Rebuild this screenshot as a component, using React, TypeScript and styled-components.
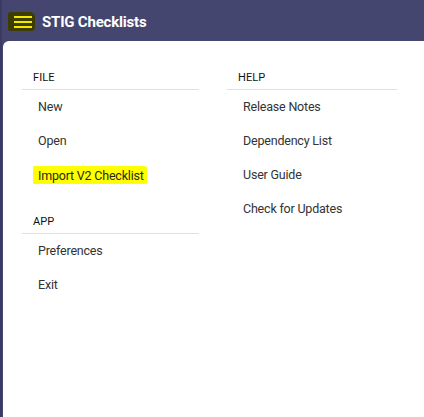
import React from "react";
import styled, { createGlobalStyle } from "styled-components";

const Global = createGlobalStyle`
  html, body { margin: 0; padding: 0; background: #45466f; }
  body { font-family: Roboto, "Liberation Sans", sans-serif; }
  #root { min-height: 417px; display: flex; flex-direction: column; }
`;

const Page = styled.div`
  display: flex;
  flex-direction: column;
  height: 417px;
  background: #45466f;
  box-shadow: inset 2px 0 0 #3a3a62;
`;

const Header = styled.header`
  height: 41px;
  display: flex;
  align-items: center;
  padding-left: 8px;
  gap: 7px;
  box-sizing: border-box;
`;

const MenuButton = styled.div`
  width: 27px;
  height: 19px;
  margin-top: 2px;
  background: #3d3d02;
  border-radius: 3px 5px 4px 2px;
  display: flex;
  flex-direction: column;
  justify-content: center;
  align-items: center;
  gap: 3px;
  padding-left: 3px;
  box-sizing: border-box;
`;

const MenuLine = styled.span`
  display: block;
  width: 18px;
  height: 2px;
  background: #f3e800;
`;

const Title = styled.h1`
  margin: 3px 0 0;
  color: #ffffff;
  font-size: 15px;
  font-weight: 700;
  letter-spacing: -0.2px;
`;

const Panel = styled.main`
  flex: 1;
  margin-left: 3px;
  background: #ffffff;
  border-top-left-radius: 6px;
  padding: 7px 0 0 19px;
  display: flex;
  gap: 28px;
  align-items: flex-start;
`;

const Column = styled.div<{ $w: number }>`
  width: ${(p) => p.$w}px;
  display: flex;
  flex-direction: column;
`;

const SectionLabel = styled.div`
  padding: 24px 0 5px 11px;
  line-height: 12px;
  font-size: 11px;
  color: #111;
  border-bottom: 1px solid #e0e0e0;
  letter-spacing: 0.1px;
`;

const Item = styled.div`
  height: 34px;
  display: flex;
  align-items: center;
  padding-left: 16px;
  padding-bottom: 1px;
  box-sizing: border-box;
  font-size: 12.5px;
  letter-spacing: -0.2px;
  color: #333;
`;

const Highlight = styled.span`
  background: #ffff00;
  margin-left: -5px;
  padding: 2px 3px 1px 5px;
  border-radius: 1px 3px 2px 1px;
  color: #2a2a10;
`;

export default function App() {
  return (
    <>
      <Global />
      <Page>
        <Header>
          <MenuButton>
            <MenuLine />
            <MenuLine />
            <MenuLine />
          </MenuButton>
          <Title>STIG Checklists</Title>
        </Header>
        <Panel>
          <Column $w={177}>
            <SectionLabel>FILE</SectionLabel>
            <Item>New</Item>
            <Item>Open</Item>
            <Item>
              <Highlight>Import V2 Checklist</Highlight>
            </Item>
            <SectionLabel>APP</SectionLabel>
            <Item>Preferences</Item>
            <Item>Exit</Item>
          </Column>
          <Column $w={170}>
            <SectionLabel>HELP</SectionLabel>
            <Item>Release Notes</Item>
            <Item>Dependency List</Item>
            <Item>User Guide</Item>
            <Item>Check for Updates</Item>
          </Column>
        </Panel>
      </Page>
    </>
  );
}
